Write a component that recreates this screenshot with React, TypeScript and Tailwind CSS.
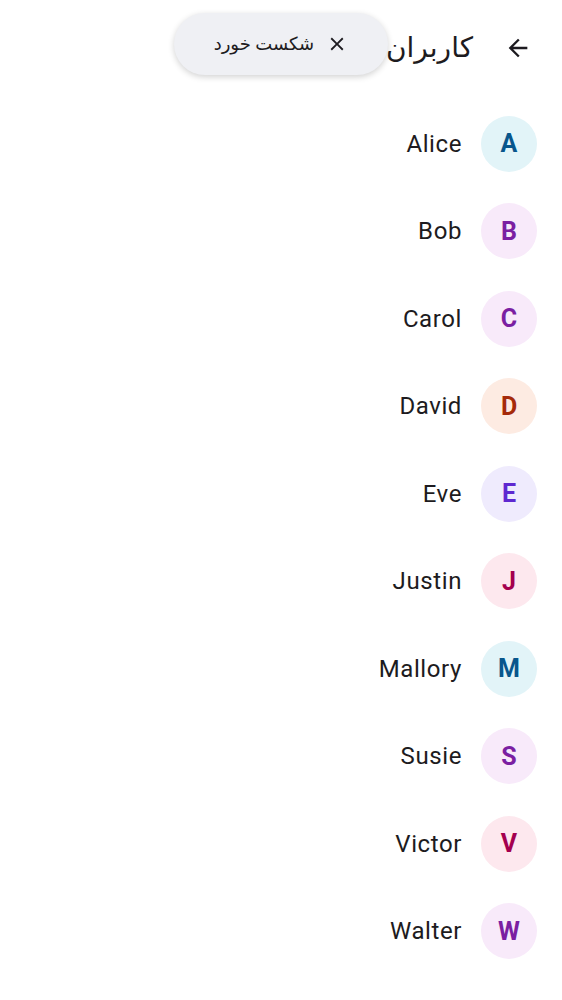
import React from "react";

const users = [
  { name: "Alice", bg: "bg-[#e2f4f8]", fg: "text-[#08568c]" },
  { name: "Bob", bg: "bg-[#f8eafa]", fg: "text-[#7b1fa2]" },
  { name: "Carol", bg: "bg-[#f8eafa]", fg: "text-[#7b1fa2]" },
  { name: "David", bg: "bg-[#fdebe2]", fg: "text-[#a52a0a]" },
  { name: "Eve", bg: "bg-[#efebfd]", fg: "text-[#5e28d0]" },
  { name: "Justin", bg: "bg-[#fde8ee]", fg: "text-[#a4004f]" },
  { name: "Mallory", bg: "bg-[#e2f4f8]", fg: "text-[#08568c]" },
  { name: "Susie", bg: "bg-[#f8eafa]", fg: "text-[#7b1fa2]" },
  { name: "Victor", bg: "bg-[#fde8ee]", fg: "text-[#a4004f]" },
  { name: "Walter", bg: "bg-[#f8eafa]", fg: "text-[#7b1fa2]" },
];

export default function App() {
  return (
    <div
      dir="rtl"
      className="relative w-[562px] h-[1000px] bg-white text-[#1d1b20] overflow-hidden"
      style={{ fontFamily: "Roboto, 'DejaVu Sans', sans-serif" }}
    >
      <header className="h-[96px] flex items-center pr-[30px]">
        <svg width="28" height="28" viewBox="0 0 24 24" className="shrink-0">
          <path d="M20 11H7.83l5.59-5.59L12 4l-8 8 8 8 1.41-1.41L7.83 13H20v-2z" fill="#1d1b20" />
        </svg>
        <h1 className="mr-[31px] text-[28px] leading-none whitespace-nowrap font-normal">کاربران مسدود شده</h1>
      </header>
      <ul className="pt-[4px]">
        {users.map((u) => (
          <li key={u.name} className="h-[87.5px] flex items-center pr-[25px] gap-[19px]">
            <div className={`w-[56px] h-[56px] rounded-full flex items-center justify-center ${u.bg}`}>
              <span className={`text-[25px] font-bold ${u.fg}`}>{u.name[0]}</span>
            </div>
            <span className="text-[24px] tracking-[0.6px]">{u.name}</span>
          </li>
        ))}
      </ul>
      <div className="absolute top-[13px] left-[174px] w-[214px] h-[62px] rounded-full bg-[#eff0f4] shadow-[0_2px_6px_rgba(0,0,0,0.18)] flex items-center pr-[40px] gap-[12px]">
        <svg width="22" height="22" viewBox="0 0 24 24" className="shrink-0">
          <path d="M19 6.41L17.59 5 12 10.59 6.41 5 5 6.41 10.59 12 5 17.59 6.41 19 12 13.41 17.59 19 19 17.59 13.41 12z" fill="#1d1b20" />
        </svg>
        <span className="text-[18px] leading-none text-[#1d1b20] whitespace-nowrap">شکست خورد</span>
      </div>
    </div>
  );
}
